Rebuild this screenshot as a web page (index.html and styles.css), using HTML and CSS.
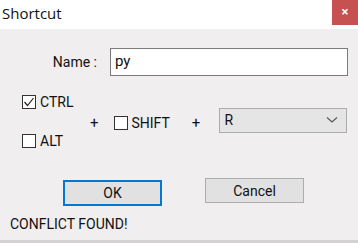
FILE: index.html
```html
<!DOCTYPE html>
<html lang="en">
<head>
  <meta charset="UTF-8">
  <title>Shortcut</title>
  <link rel="stylesheet" href="styles.css">
</head>
<body>
  <div class="window">
    <div class="titlebar">
      <span class="title">Shortcut</span>
      <span class="close">&#215;</span>
    </div>
    <div class="content">
      <div class="name-row">
        <label class="name-label">Name :</label>
        <div class="name-input">py</div>
      </div>

      <div class="keys">
        <div class="mods">
          <div class="check">
            <span class="box">
              <svg width="12" height="12" viewBox="0 0 12 12"><polyline points="1.5,6 4.5,9.5 10.5,2" fill="none" stroke="#222" stroke-width="1.2"/></svg>
            </span>
            <span>CTRL</span>
          </div>
          <div class="check">
            <span class="box"></span>
            <span>ALT</span>
          </div>
        </div>
        <span class="plus plus-one">+</span>
        <div class="check shift">
          <span class="box"></span>
          <span>SHIFT</span>
        </div>
        <span class="plus plus-two">+</span>
        <div class="select">
          <span>R</span>
          <svg width="12" height="8" viewBox="0 0 12 8"><polyline points="1,1.5 6,6 11,1.5" fill="none" stroke="#555" stroke-width="1.1"/></svg>
        </div>
      </div>

      <div class="buttons">
        <button class="btn btn-ok">OK</button>
        <button class="btn btn-cancel">Cancel</button>
      </div>

      <div class="status">CONFLICT FOUND!</div>
    </div>
  </div>
</body>
</html>
```

FILE: styles.css
```css
body {
  margin: 0;
  font-family: Roboto, "Noto Sans", sans-serif;
  font-size: 14px;
  color: #111;
  background: #f0eeee;
}

.window {
  width: 358px;
  height: 243px;
  display: flex;
  flex-direction: column;
  overflow: hidden;
}

.titlebar {
  height: 29px;
  background: #fff;
  display: flex;
  align-items: flex-start;
  justify-content: space-between;
}

.title {
  font-family: "Open Sans", sans-serif;
  font-size: 15px;
  padding-left: 2px;
  line-height: 27px;
  color: #111;
}

.close {
  width: 26px;
  height: 25px;
  background: #c75050;
  color: #fff;
  font-size: 13px;
  font-weight: bold;
  line-height: 24px;
  text-align: center;
}

.content {
  flex: 1;
  border-bottom: 3px solid #d4d2d2;
}

.name-row {
  display: flex;
  align-items: center;
  margin-top: 19px;
  height: 28px;
}

.name-label {
  width: 97px;
  text-align: right;
  margin-right: 13px;
}

.name-input {
  width: 232px;
  height: 26px;
  border: 1px solid #7a7a7a;
  background: #fff;
  font-size: 15px;
  line-height: 24px;
  padding-left: 4px;
}

.keys {
  display: flex;
  align-items: center;
  margin-top: 19px;
  padding-left: 22px;
}

.mods {
  display: flex;
  flex-direction: column;
  gap: 25px;
  width: 68px;
}

.check {
  display: flex;
  align-items: center;
  gap: 4px;
  height: 14px;
  line-height: 14px;
}

.box {
  width: 12px;
  height: 12px;
  border: 1px solid #333;
  background: #fff;
  display: flex;
  align-items: center;
  justify-content: center;
}

.plus {
  font-size: 15px;
  margin-top: 2px;
}

.shift {
  margin-left: 15px;
  margin-top: 3px;
}

.plus-two {
  margin-left: 22px;
}

.select {
  box-sizing: border-box;
  margin-left: 19px;
  margin-top: -3px;
  width: 128px;
  height: 25px;
  border: 1px solid #acacac;
  background: #e5e5e5;
  display: flex;
  align-items: center;
  justify-content: space-between;
  padding: 0 8px 0 4px;
}

.buttons {
  display: flex;
  align-items: flex-start;
  margin-top: 30px;
  padding-left: 63px;
  gap: 43px;
}

.btn {
  font-family: inherit;
  font-size: 14px;
  color: #111;
  width: 99px;
  background: #e1e1e1;
  padding: 0;
}

.btn-ok {
  height: 26px;
  margin-top: 2px;
  border: 2px solid #0078d7;
}

.btn-cancel {
  height: 25px;
  border: 1px solid #adadad;
}

.status {
  padding-left: 10px;
  margin-top: 10px;
}
```
